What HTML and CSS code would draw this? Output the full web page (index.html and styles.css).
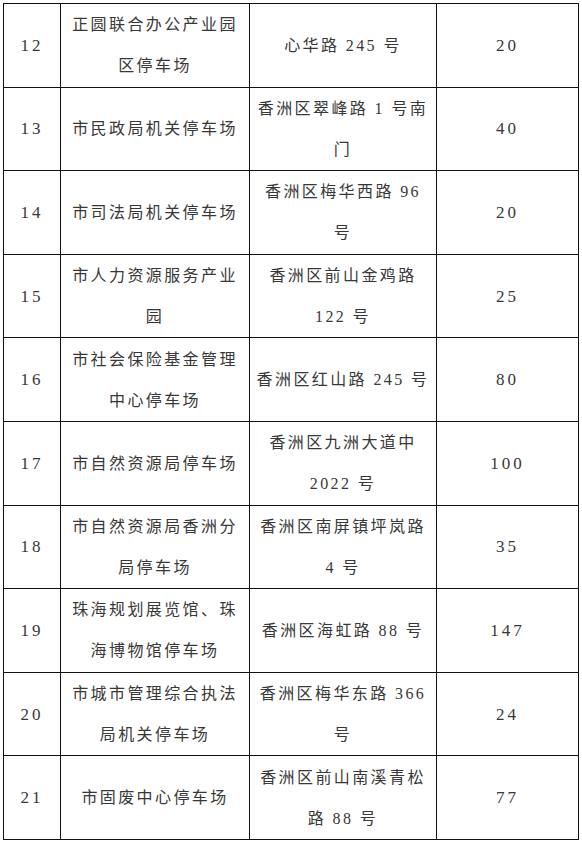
FILE: index.html
```html
<!DOCTYPE html>
<html lang="zh-CN">
<head>
<meta charset="utf-8">
<title>停车场列表</title>
<link rel="stylesheet" href="styles.css">
</head>
<body>
<table class="lots">
  <colgroup>
    <col class="c-no">
    <col class="c-name">
    <col class="c-addr">
    <col class="c-count">
  </colgroup>
  <tbody>
    <tr><td class="num">12</td><td>正圆联合办公产业园<br>区停车场</td><td>心华路 245 号</td><td class="num">20</td></tr>
    <tr><td class="num">13</td><td>市民政局机关停车场</td><td>香洲区翠峰路 1 号南<br>门</td><td class="num">40</td></tr>
    <tr><td class="num">14</td><td>市司法局机关停车场</td><td>香洲区梅华西路 96<br>号</td><td class="num">20</td></tr>
    <tr><td class="num">15</td><td>市人力资源服务产业<br>园</td><td>香洲区前山金鸡路<br>122 号</td><td class="num">25</td></tr>
    <tr><td class="num">16</td><td>市社会保险基金管理<br>中心停车场</td><td>香洲区红山路 245 号</td><td class="num">80</td></tr>
    <tr><td class="num">17</td><td>市自然资源局停车场</td><td>香洲区九洲大道中<br>2022 号</td><td class="num">100</td></tr>
    <tr><td class="num">18</td><td>市自然资源局香洲分<br>局停车场</td><td>香洲区南屏镇坪岚路<br>4 号</td><td class="num">35</td></tr>
    <tr><td class="num">19</td><td>珠海规划展览馆、珠<br>海博物馆停车场</td><td>香洲区海虹路 88 号</td><td class="num">147</td></tr>
    <tr><td class="num">20</td><td>市城市管理综合执法<br>局机关停车场</td><td>香洲区梅华东路 366<br>号</td><td class="num">24</td></tr>
    <tr><td class="num">21</td><td>市固废中心停车场</td><td>香洲区前山南溪青松<br>路 88 号</td><td class="num">77</td></tr>
  </tbody>
</table>
</body>
</html>
```

FILE: styles.css
```css
html, body {
  margin: 0;
  padding: 0;
  background: #ffffff;
}

body {
  padding: 3px 0 0 3px;
}

.lots {
  border-collapse: collapse;
  table-layout: fixed;
  width: 575px;
  font-family: "Liberation Serif", "Noto Sans CJK SC", serif;
  font-size: 16px;
  font-weight: 400;
  color: #383838;
}

.c-no { width: 57px; }
.c-name { width: 189px; }
.c-addr { width: 187px; }
.c-count { width: 142px; }

.lots td {
  border: 1.5px solid #111111;
  height: 83.6px;
  padding: 0 4px;
  box-sizing: border-box;
  text-align: center;
  vertical-align: middle;
  line-height: 41px;
  letter-spacing: 2.4px;
  white-space: nowrap;
}

.lots td.num {
  font-family: "Liberation Serif", serif;
  font-size: 17px;
  letter-spacing: 3px;
}
```
